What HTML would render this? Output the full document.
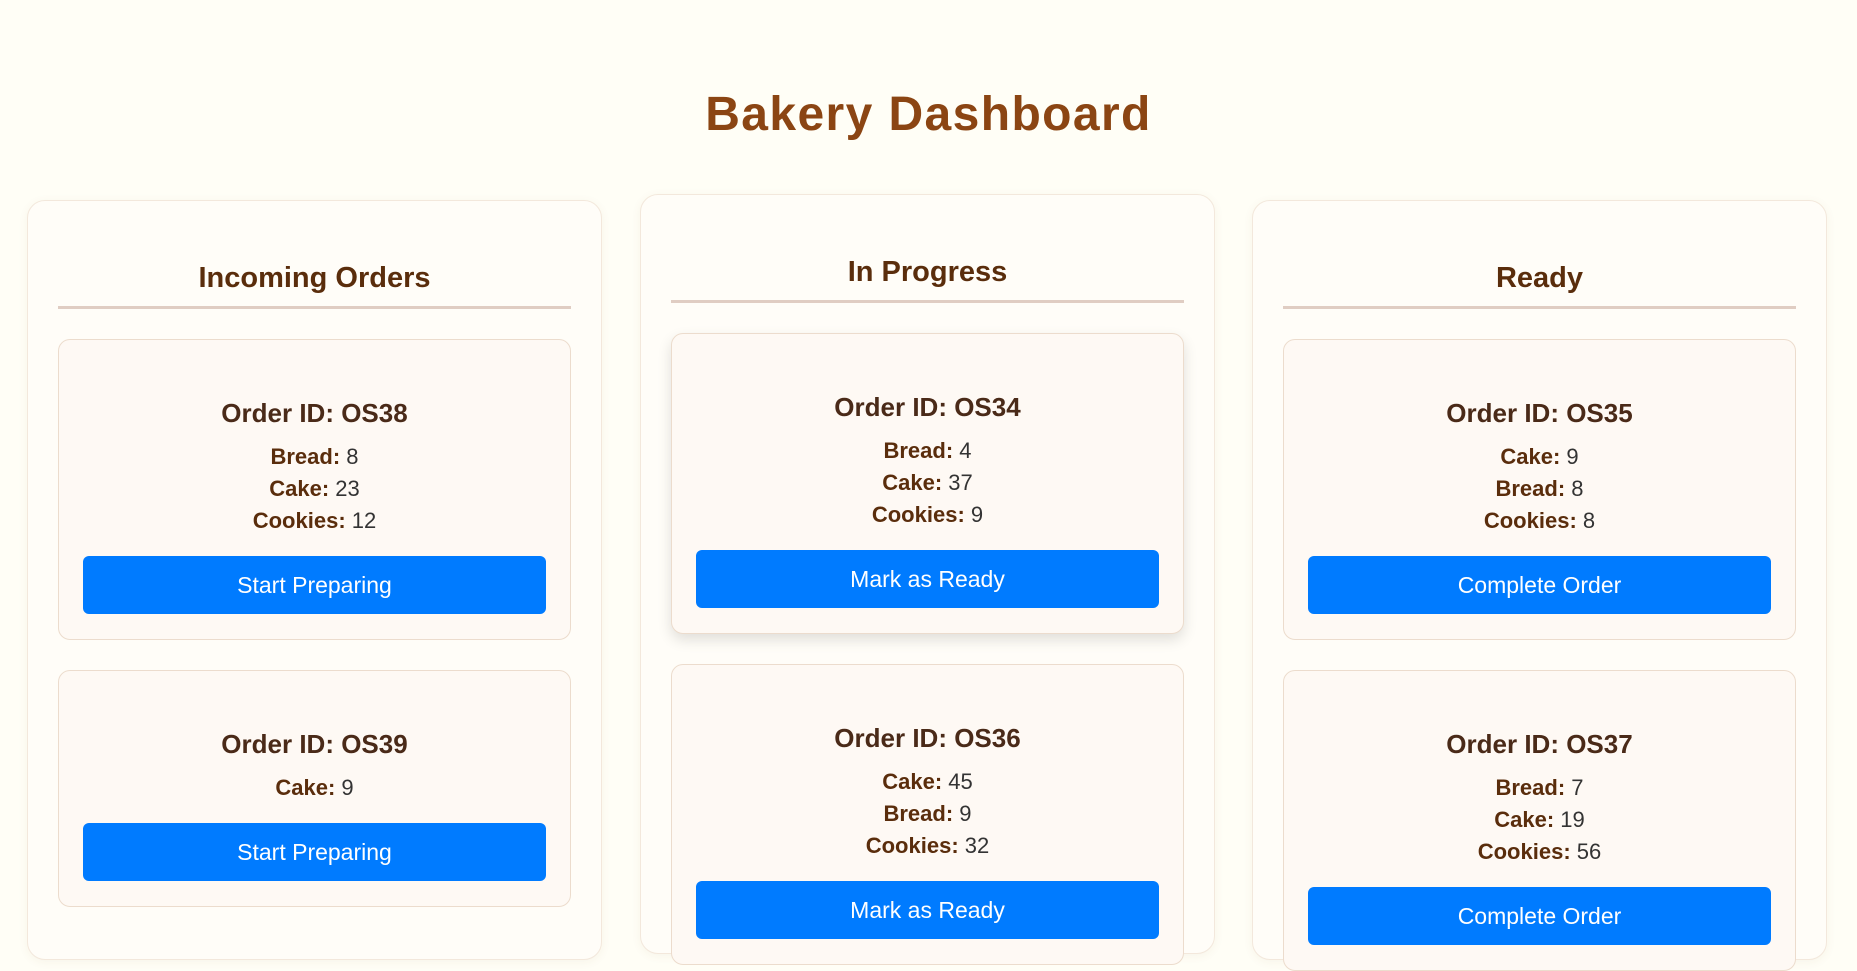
<!DOCTYPE html>
<html><head><meta charset="utf-8"><style>
*{box-sizing:border-box;margin:0;padding:0}
html,body{width:1857px;height:885px;overflow:hidden;background:#fffef6;font-family:"Liberation Sans",Arial,sans-serif}
h1{position:absolute;left:0;right:0;top:84px;text-align:center;font-size:48px;letter-spacing:1.4px;color:#8b4513;font-weight:bold;line-height:62px}
.col{position:absolute;top:200px;width:575px;height:760px;background:#fffdf8;border:1px solid #f3e8dc;border-radius:18px;box-shadow:0 2px 10px rgba(120,90,40,0.06);padding:0 30px}
.col h2{margin-top:61px;text-align:center;font-size:29px;line-height:32px;color:#5a2d0c;padding-bottom:12px;border-bottom:3px solid #e0cdc3}
.card{margin-top:30px;background:#fef9f4;border:1px solid #ecdccd;border-radius:12px;padding:58px 24px 25px;text-align:center}
.card+.card{margin-top:30px}
.card h3{font-size:26px;line-height:30px;color:#4a2a18;margin-bottom:13px}
.card p{font-size:22px;line-height:32px;color:#333}
.card p b{color:#5a2d0c}
.btn{margin-top:19px;height:58px;background:#007bff;border-radius:6px;color:#fff;font-size:23px;line-height:58px}
.hov{box-shadow:0 6px 14px rgba(0,0,0,0.12)}
</style></head><body>
<h1>Bakery Dashboard</h1>
<div class="col" style="left:27px">
<h2>Incoming Orders</h2>
<div class="card"><h3>Order ID: OS38</h3><p><b>Bread:</b> 8</p><p><b>Cake:</b> 23</p><p><b>Cookies:</b> 12</p><div class="btn">Start Preparing</div></div>
<div class="card"><h3>Order ID: OS39</h3><p><b>Cake:</b> 9</p><div class="btn">Start Preparing</div></div>
</div>
<div class="col" style="left:640px;top:194px">
<h2>In Progress</h2>
<div class="card hov"><h3>Order ID: OS34</h3><p><b>Bread:</b> 4</p><p><b>Cake:</b> 37</p><p><b>Cookies:</b> 9</p><div class="btn">Mark as Ready</div></div>
<div class="card"><h3>Order ID: OS36</h3><p><b>Cake:</b> 45</p><p><b>Bread:</b> 9</p><p><b>Cookies:</b> 32</p><div class="btn">Mark as Ready</div></div>
</div>
<div class="col" style="left:1252px">
<h2>Ready</h2>
<div class="card"><h3>Order ID: OS35</h3><p><b>Cake:</b> 9</p><p><b>Bread:</b> 8</p><p><b>Cookies:</b> 8</p><div class="btn">Complete Order</div></div>
<div class="card"><h3>Order ID: OS37</h3><p><b>Bread:</b> 7</p><p><b>Cake:</b> 19</p><p><b>Cookies:</b> 56</p><div class="btn">Complete Order</div></div>
</div>
</body></html>
